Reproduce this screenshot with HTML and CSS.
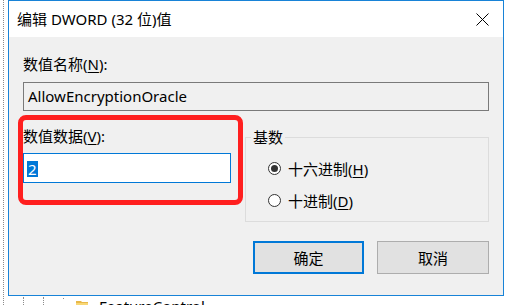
FILE: index.html
```html
<!DOCTYPE html>
<html lang="zh-CN">
<head>
  <meta charset="UTF-8">
  <title>编辑 DWORD (32 位)值</title>
  <link rel="stylesheet" href="styles.css">
</head>
<body>
  <!-- Arborescence derrière la fenêtre -->
  <div class="tree">
    <div class="tree-line line-root"></div>
    <div class="tree-line line-a"></div>
    <div class="tree-line line-b"></div>
    <div class="tree-dot"></div>
    <div class="tree-item">
      <svg class="folder" width="12" height="10" viewBox="0 0 12 10">
        <path d="M0 1h5l1 1h6v8H0z" fill="#e8b84a"/>
        <path d="M0 3h12v7H0z" fill="#f8d775"/>
      </svg>
      <span>FeatureControl</span>
    </div>
  </div>

  <!-- Fenêtre -->
  <div class="dialog">
    <div class="titlebar">
      <span class="title">编辑 DWORD (32 位)值</span>
      <svg class="close" width="13" height="13" viewBox="0 0 13 13">
        <path d="M0.5 0.5L12.5 12.5M12.5 0.5L0.5 12.5" stroke="#000" stroke-width="1"/>
      </svg>
    </div>
    <div class="dialog-body">
      <div class="label">数值名称(<u>N</u>):</div>
      <div class="field field-readonly">AllowEncryptionOracle</div>
      <div class="row">
        <div class="data-col">
          <div class="label">数值数据(<u>V</u>):</div>
          <div class="field field-edit"><span class="sel">2</span></div>
        </div>
        <fieldset class="base">
          <legend>基数</legend>
          <label class="radio"><span class="dot checked"></span><span>十六进制(<u>H</u>)</span></label>
          <label class="radio"><span class="dot"></span><span>十进制(<u>D</u>)</span></label>
        </fieldset>
      </div>
      <div class="buttons">
        <button class="btn btn-default">确定</button>
        <button class="btn">取消</button>
      </div>
    </div>
    <div class="highlight"></div>
  </div>
</body>
</html>
```

FILE: styles.css
```css
body {
  margin: 0;
  position: relative;
  height: 305px;
  overflow: hidden;
  background: #fff;
  font-family: "Noto Sans", "Noto Sans CJK SC", sans-serif;
  font-size: 15px;
  color: #000;
}
u {
  text-underline-offset: 2px;
}

/* Arborescence */
.tree {
  padding: 296px 0 0 76px;
}
.tree-line {
  position: absolute;
  border-left: 1px dotted #8c8c8c;
}
.line-root {
  left: 3px;
  top: 0;
  height: 305px;
}
.line-a {
  left: 23px;
  top: 297px;
  height: 8px;
}
.line-b {
  left: 43px;
  top: 297px;
  height: 8px;
}
.tree-dot {
  position: absolute;
  left: 63px;
  top: 298px;
  width: 1px;
  height: 1px;
  background: #8c8c8c;
}
.tree-item {
  display: flex;
  align-items: flex-start;
  gap: 11px;
  line-height: 20px;
}
.folder {
  margin-top: 4px;
}

/* Fenêtre */
.dialog {
  position: absolute;
  left: 8px;
  top: 0;
  width: 496px;
  height: 296px;
  box-sizing: border-box;
  border: 1px solid #1883d7;
  background: #f0f0f0;
}
.titlebar {
  height: 36px;
  background: #fff;
  display: flex;
  align-items: center;
  justify-content: space-between;
  padding: 0 14px 0 8px;
}
.title {
  line-height: 20px;
}
.close {
  margin-top: 1px;
}
.dialog-body {
  padding: 17px 14px 0;
}
.label {
  height: 20px;
  line-height: 20px;
}
.field {
  box-sizing: border-box;
}
.field-readonly {
  margin-top: 8px;
  height: 29px;
  border: 1px solid #7a7a7a;
  padding: 0 4px;
  line-height: 27px;
}
.row {
  display: grid;
  grid-template-columns: 208px 244px;
  column-gap: 14px;
  align-items: start;
  margin-top: 15px;
}
.field-edit {
  margin-top: 7px;
  height: 30px;
  border: 1px solid #0078d7;
  background: #fff;
  padding: 0 3px;
  display: flex;
  align-items: center;
}
.sel {
  display: inline-block;
  background: #0078d7;
  color: #fff;
  height: 16px;
  line-height: 16px;
  padding: 0 1px;
  margin-top: 1px;
}

/* Groupe Base */
.base {
  margin: 1px 0 0;
  padding: 11px 0 11px;
  border: 1px solid #dcdcdc;
  min-width: 0;
}
.base legend {
  margin-left: 5px;
  padding: 0 2px;
  line-height: 20px;
}
.radio {
  display: flex;
  align-items: center;
  gap: 7px;
  height: 20px;
  margin-left: 22px;
}
.radio + .radio {
  margin-top: 12px;
}
.dot {
  width: 13px;
  height: 13px;
  box-sizing: border-box;
  border: 1px solid #333;
  border-radius: 50%;
  background: #fff;
  display: flex;
  align-items: center;
  justify-content: center;
}
.dot.checked::after {
  content: "";
  width: 7px;
  height: 7px;
  border-radius: 50%;
  background: #333;
}

/* Boutons */
.buttons {
  display: flex;
  justify-content: flex-end;
  gap: 13px;
  margin-top: 19px;
}
.btn {
  width: 112px;
  height: 33px;
  padding: 0;
  background: #e1e1e1;
  border: 1px solid #adadad;
  font: inherit;
  color: #000;
}
.btn-default {
  width: 111px;
  border: 2px solid #0078d7;
}

/* Annotation rouge */
.highlight {
  position: absolute;
  left: 9px;
  top: 114px;
  width: 225px;
  height: 90px;
  box-sizing: border-box;
  border: 5px solid #ff1f1f;
  border-radius: 8px;
}
```
